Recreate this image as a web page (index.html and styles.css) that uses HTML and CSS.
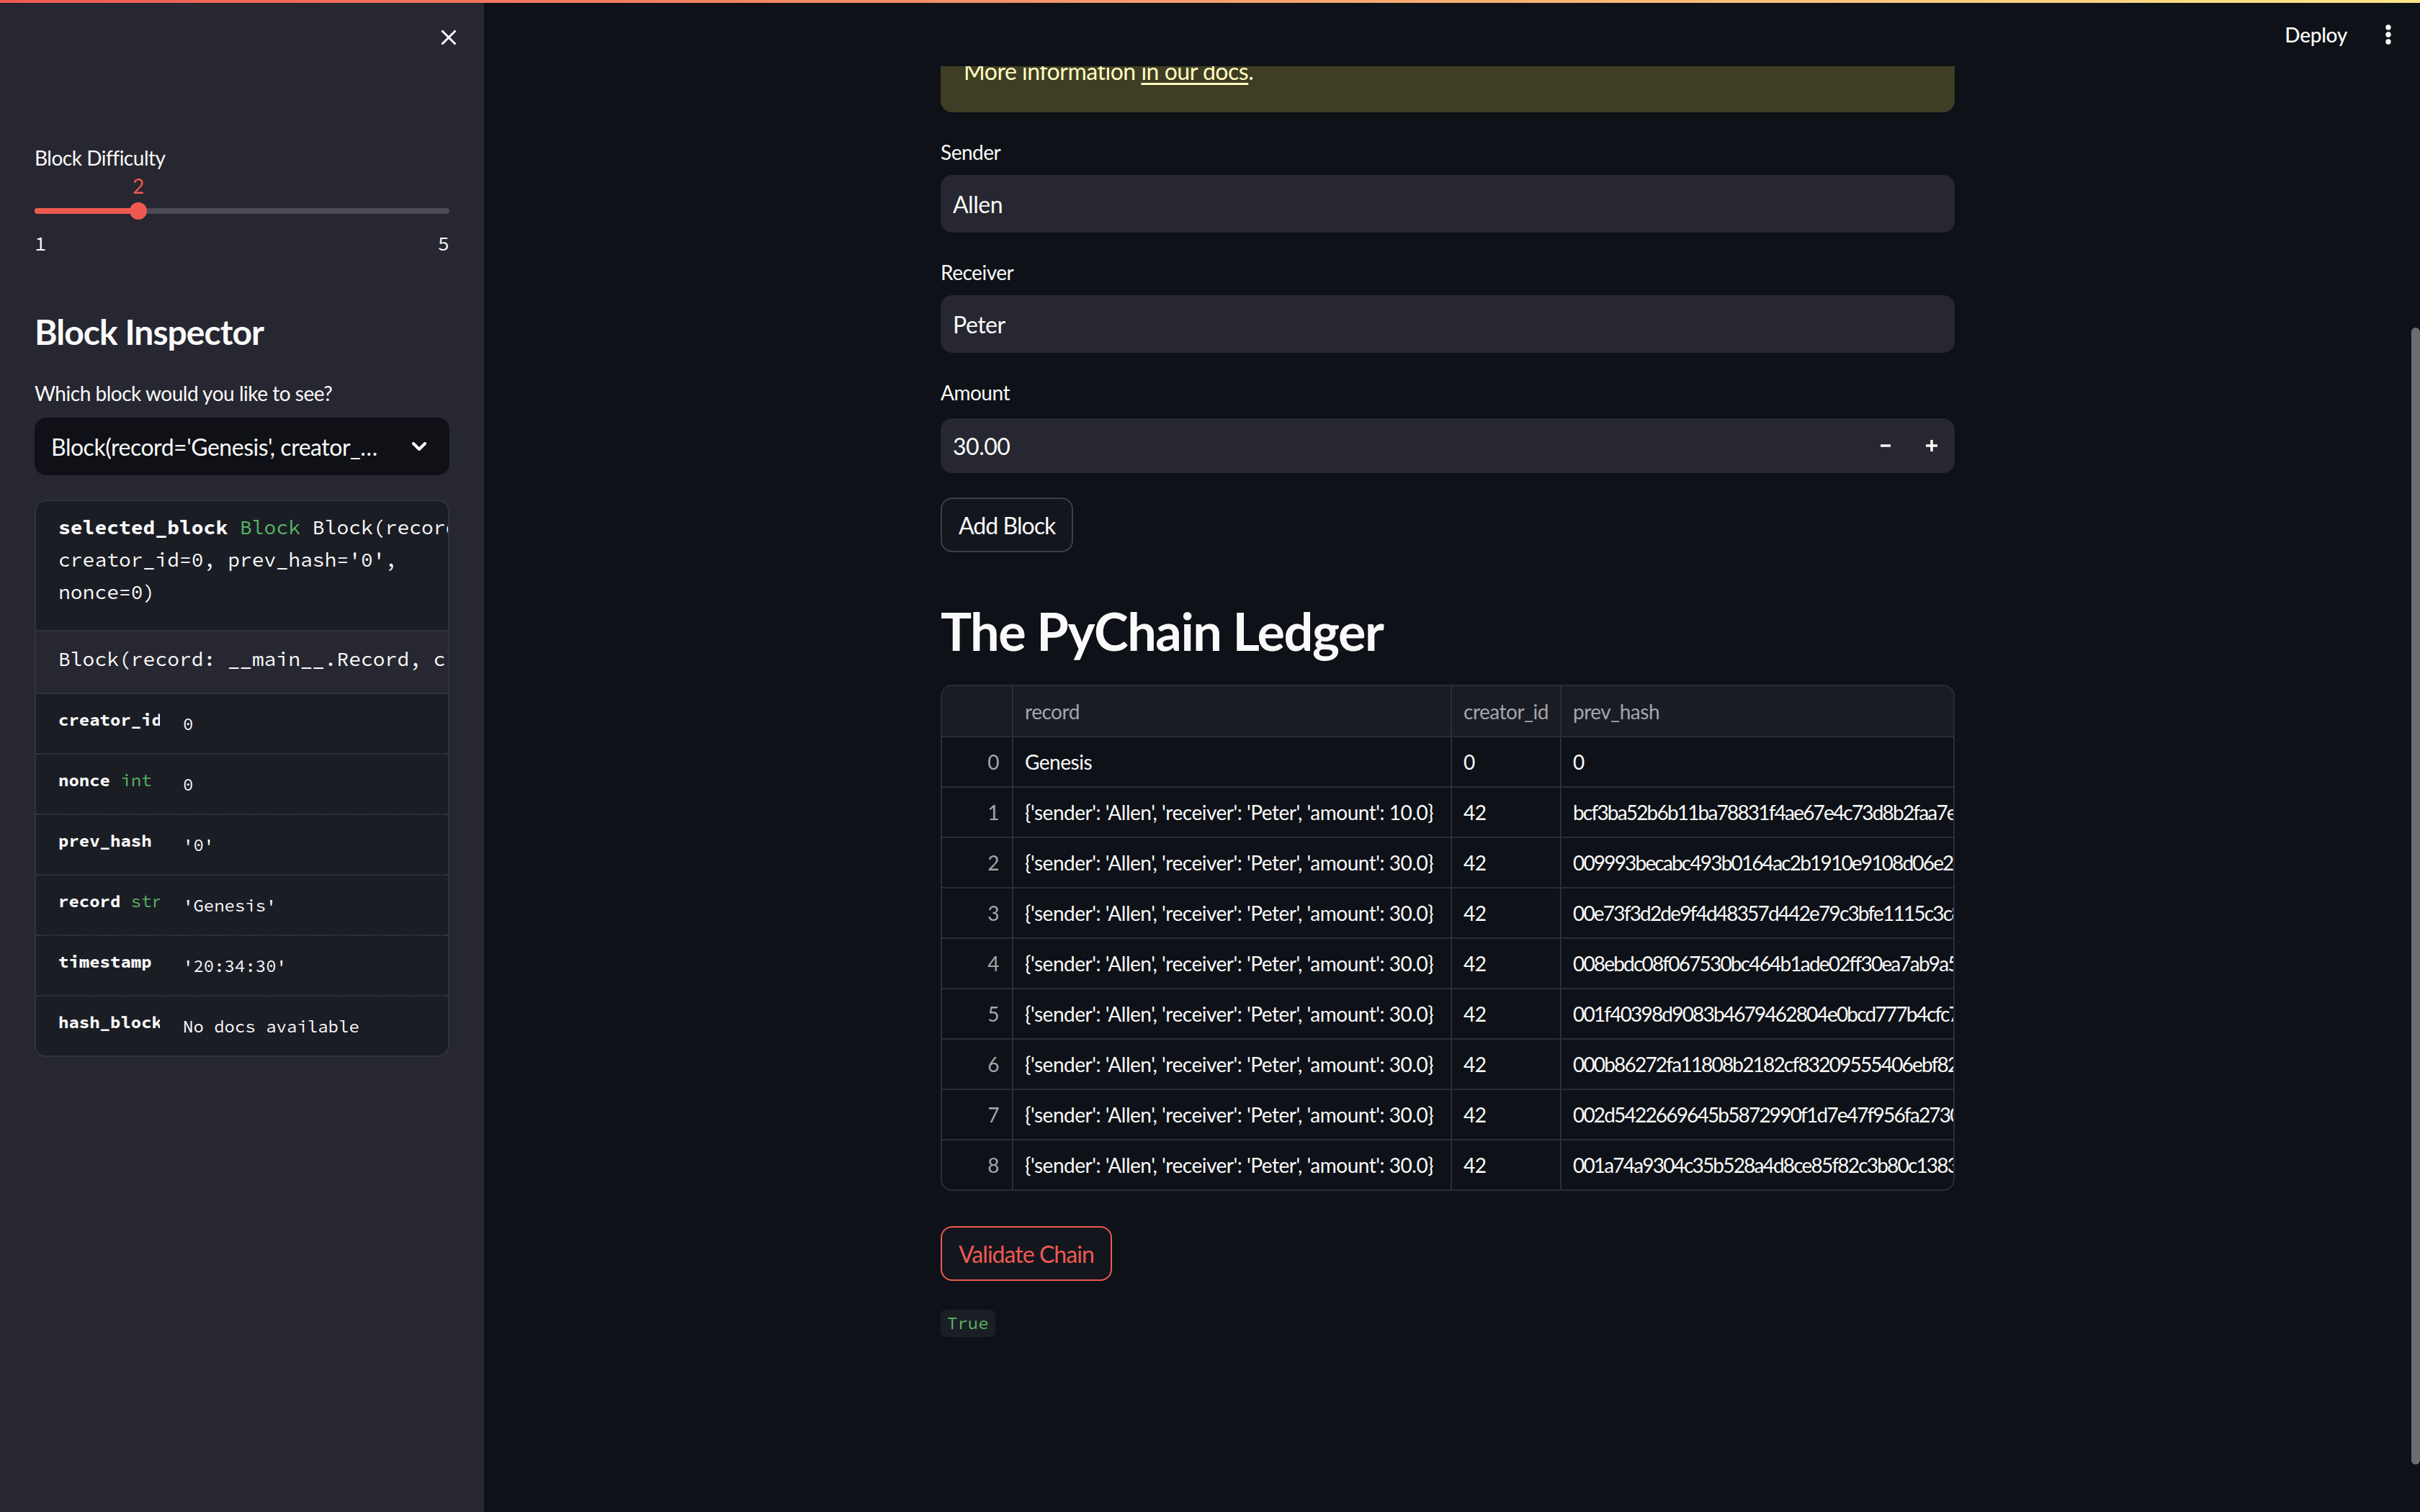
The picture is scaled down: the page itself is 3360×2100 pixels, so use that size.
FILE: index.html
```html
<!DOCTYPE html>
<html lang="en">
<head>
<meta charset="utf-8">
<title>PyChain</title>
<link rel="stylesheet" href="styles.css">
</head>
<body>
<div class="decoration"></div>
<div class="app">
  <aside class="sidebar">
    <div class="sb-header">
      <button class="close-btn" aria-label="Close sidebar">
        <svg width="22" height="22" viewBox="0 0 22 22"><path d="M1.5 1.5 L20.5 20.5 M20.5 1.5 L1.5 20.5" stroke="#fafafa" stroke-width="3" fill="none"/></svg>
      </button>
    </div>

    <div class="widget-label">Block Difficulty</div>
    <div class="slider">
      <div class="track"><div class="fill" style="width:25%"></div></div>
      <div class="thumb" style="left:25%"><span class="thumb-value">2</span></div>
    </div>
    <div class="ticks"><span>1</span><span>5</span></div>

    <h2 class="sb-title">Block Inspector</h2>
    <div class="widget-label">Which block would you like to see?</div>
    <div class="select">
      <span class="select-value">Block(record='Genesis', creator_id=0, prev_hash='0', nonce=0)</span>
      <svg class="chevron" width="20" height="12" viewBox="0 0 20 12"><path d="M2 2 L10 10 L18 2" stroke="#fafafa" stroke-width="4" fill="none" stroke-linecap="round" stroke-linejoin="round"/></svg>
    </div>

    <div class="help-panel">
      <div class="hp-head">
        <div class="hp-line"><b>selected_block</b> <span class="green">Block</span> Block(record='Genesis',</div>
        <div class="hp-line">creator_id=0, prev_hash='0',</div>
        <div class="hp-line">nonce=0)</div>
      </div>
      <div class="hp-sig">Block(record: __main__.Record, creator_id: int, prev_hash: str = '0', timestamp: str = '20:34:30', nonce: int = 0) -&gt; None</div>
      <div class="hp-row"><div class="hp-name"><b>creator_id</b> <span class="green">int</span></div><div class="hp-value">0</div></div>
      <div class="hp-row"><div class="hp-name"><b>nonce</b> <span class="green">int</span></div><div class="hp-value">0</div></div>
      <div class="hp-row"><div class="hp-name"><b>prev_hash</b> <span class="green">str</span></div><div class="hp-value">'0'</div></div>
      <div class="hp-row"><div class="hp-name"><b>record</b> <span class="green">str</span></div><div class="hp-value">'Genesis'</div></div>
      <div class="hp-row"><div class="hp-name"><b>timestamp</b> <span class="green">str</span></div><div class="hp-value">'20:34:30'</div></div>
      <div class="hp-row last"><div class="hp-name"><b>hash_block</b> <span class="green">method</span></div><div class="hp-value">No docs available</div></div>
    </div>
  </aside>

  <main class="main">
    <header class="app-header">
      <span class="deploy">Deploy</span>
      <svg class="menu" width="8" height="28" viewBox="0 0 8 28"><circle cx="4" cy="4" r="3.7" fill="#fafafa"/><circle cx="4" cy="14" r="3.7" fill="#fafafa"/><circle cx="4" cy="24" r="3.7" fill="#fafafa"/></svg>
    </header>
    <div class="view">
      <div class="content">
        <div class="alert">
          <p><code>st.cache</code> is deprecated. Please use one of Streamlit's new caching commands,</p>
          <p><code>st.cache_data</code> or <code>st.cache_resource</code>.</p>
          <p class="alert-gap">More information <a href="#">in our docs</a>.</p>
        </div>

        <div class="field-label">Sender</div>
        <div class="text-input">Allen</div>

        <div class="field-label">Receiver</div>
        <div class="text-input">Peter</div>

        <div class="field-label">Amount</div>
        <div class="number-input">
          <span class="num-value">30.00</span>
          <span class="step"><svg width="18" height="18" viewBox="0 0 18 18"><path d="M2 9 H16" stroke="#fafafa" stroke-width="3.5"/></svg></span>
          <span class="step"><svg width="18" height="18" viewBox="0 0 18 18"><path d="M1 9 H17 M9 1 V17" stroke="#fafafa" stroke-width="3.5"/></svg></span>
        </div>

        <button class="btn add-btn">Add Block</button>

        <h1 class="ledger-title">The PyChain Ledger</h1>

        <div class="table-wrap">
          <table class="ledger">
            <colgroup>
              <col class="c-idx"><col class="c-rec"><col class="c-cre"><col class="c-hash"><col class="c-ts"><col class="c-nonce">
            </colgroup>
            <thead>
              <tr><th></th><th>record</th><th>creator_id</th><th>prev_hash</th><th>timestamp</th><th>nonce</th></tr>
            </thead>
            <tbody>
              <tr><td class="idx">0</td><td>Genesis</td><td>0</td><td class="hash">0</td><td>20:34:30</td><td>0</td></tr>
              <tr><td class="idx">1</td><td>{'sender': 'Allen', 'receiver': 'Peter', 'amount': 10.0}</td><td>42</td><td class="hash">bcf3ba52b6b11ba78831f4ae67e4c73d8b2faa7e3b5c91d07a4f2e8b6d03c1f5</td><td>20:35:02</td><td>412</td></tr>
              <tr><td class="idx">2</td><td>{'sender': 'Allen', 'receiver': 'Peter', 'amount': 30.0}</td><td>42</td><td class="hash">009993becabc493b0164ac2b1910e9108d06e24a7f1c9e30b58d26e1f7a4c093</td><td>20:35:41</td><td>87</td></tr>
              <tr><td class="idx">3</td><td>{'sender': 'Allen', 'receiver': 'Peter', 'amount': 30.0}</td><td>42</td><td class="hash">00e73f3d2de9f4d48357d442e79c3bfe1115c3c8a2d71f04e96b3c58d1e2a7f0</td><td>20:35:44</td><td>301</td></tr>
              <tr><td class="idx">4</td><td>{'sender': 'Allen', 'receiver': 'Peter', 'amount': 30.0}</td><td>42</td><td class="hash">008ebdc08f067530bc464b1ade02ff30ea7ab9a5c13e8f2d6047b9a1e3c85d2f</td><td>20:35:46</td><td>129</td></tr>
              <tr><td class="idx">5</td><td>{'sender': 'Allen', 'receiver': 'Peter', 'amount': 30.0}</td><td>42</td><td class="hash">001f40398d9083b4679462804e0bcd777b4cfc72e9a05d4c81b7f36e2a90d5c1</td><td>20:35:48</td><td>56</td></tr>
              <tr><td class="idx">6</td><td>{'sender': 'Allen', 'receiver': 'Peter', 'amount': 30.0}</td><td>42</td><td class="hash">000b86272fa11808b2182cf83209555406ebf82d41c7a9e3f05b28e6c1d94a70</td><td>20:35:50</td><td>644</td></tr>
              <tr><td class="idx">7</td><td>{'sender': 'Allen', 'receiver': 'Peter', 'amount': 30.0}</td><td>42</td><td class="hash">002d5422669645b5872990f1d7e47f956fa2730b8e1f4c2a967d03e5b18f2c4a</td><td>20:35:53</td><td>215</td></tr>
              <tr class="last"><td class="idx">8</td><td>{'sender': 'Allen', 'receiver': 'Peter', 'amount': 30.0}</td><td>42</td><td class="hash">001a74a9304c35b528a4d8ce85f82c3b80c1383f7e2a1d9c04b6e85a3f1d27c0</td><td>20:35:55</td><td>98</td></tr>
            </tbody>
          </table>
        </div>

        <button class="btn validate-btn">Validate Chain</button>

        <code class="result">True</code>
      </div>
    </div>
    <div class="scroll-thumb"></div>
  </main>
</div>
</body>
</html>
```

FILE: styles.css
```css
* { box-sizing: border-box; margin: 0; padding: 0; }

html, body {
  width: 3360px;
  height: 2100px;
  overflow: hidden;
  background: #0e1117;
}

body {
  font-family: "Source Sans Pro", Lato, "Noto Sans", sans-serif;
  color: #fafafa;
  position: relative;
  letter-spacing: -0.03em;
}

.decoration {
  position: absolute;
  top: 0;
  left: 0;
  right: 0;
  height: 4px;
  background: linear-gradient(90deg, #ee5a52, #fde68a);
  z-index: 10;
}

.app {
  display: flex;
  height: 2100px;
}

/* ---------- Sidebar ---------- */
.sidebar {
  width: 672px;
  flex: none;
  background: #262730;
  padding: 0 48px;
  display: flex;
  flex-direction: column;
}

.sb-header {
  height: 195px;
  display: flex;
  justify-content: flex-end;
  align-items: flex-start;
  padding-top: 41px;
}

.close-btn {
  width: 22px;
  height: 22px;
  margin-right: -10px;
  background: none;
  border: none;
  display: flex;
}

.widget-label {
  font-size: 28px;
  line-height: 48px;
  height: 48px;
  color: #fafafa;
}

.slider {
  position: relative;
  height: 64px;
}

.track {
  position: absolute;
  left: 0;
  right: 0;
  top: 46px;
  height: 8px;
  border-radius: 4px;
  background: #4a4b55;
}

.fill {
  height: 100%;
  border-radius: 4px;
  background: #ee5a52;
}

.thumb {
  position: absolute;
  top: 38px;
  width: 24px;
  height: 24px;
  border-radius: 50%;
  background: #ee5a52;
  transform: translateX(-50%);
}

.thumb-value {
  position: absolute;
  top: -40px;
  left: 50%;
  transform: translateX(-50%);
  font-size: 28px;
  line-height: 34px;
  color: #ee5a52;
}

.ticks {
  margin-top: 10px;
  height: 42px;
  display: flex;
  justify-content: space-between;
  font-family: "Source Code Pro", "DejaVu Sans Mono", monospace;
  font-size: 27px;
  line-height: 42px;
  letter-spacing: 0;
}

.sb-title {
  margin-top: 73px;
  font-size: 48px;
  line-height: 58px;
  font-weight: 700;
  letter-spacing: -0.02em;
  margin-bottom: 32px;
}

.sb-title + .widget-label {
  margin-bottom: 10px;
}

.select {
  height: 80px;
  border-radius: 16px;
  background: #0f1116;
  display: flex;
  align-items: center;
  padding: 0 32px 0 23px;
}

.select-value {
  flex: 1;
  min-width: 0;
  font-size: 32px;
  white-space: nowrap;
  overflow: hidden;
  text-overflow: ellipsis;
}

.chevron {
  flex: none;
  margin-left: 44px;
}

.help-panel {
  margin-top: 34px;
  border: 2px solid #31333b;
  border-radius: 16px;
  background: #1b1d25;
  overflow: hidden;
  font-family: "Source Code Pro", "DejaVu Sans Mono", monospace;
  letter-spacing: 0;
}

.hp-head {
  padding: 14px 0 30px 31px;
  font-size: 28px;
  line-height: 45px;
  border-bottom: 2px solid #31333b;
}

.hp-line {
  white-space: nowrap;
}

.green {
  color: #58b563;
}

.hp-sig {
  background: #262730;
  padding: 16px 0 24px 31px;
  font-size: 28px;
  line-height: 45px;
  white-space: nowrap;
  border-bottom: 2px solid #31333b;
}

.hp-row {
  height: 84px;
  display: flex;
  padding: 18px 0 0 31px;
  border-bottom: 2px dotted #3a3c45;
  font-size: 24px;
  line-height: 36px;
}

.hp-row.last {
  border-bottom: none;
  height: 82px;
}

.hp-name {
  width: 141px;
  flex: none;
  overflow: hidden;
  white-space: nowrap;
}

.hp-value {
  margin-left: 32px;
  margin-top: 6px;
  white-space: nowrap;
}

/* ---------- Main ---------- */
.main {
  flex: 1;
  min-width: 0;
  position: relative;
  display: flex;
  flex-direction: column;
  overflow: hidden;
}

.app-header {
  height: 92px;
  flex: none;
  display: flex;
  justify-content: flex-end;
  align-items: center;
  gap: 53px;
  padding: 4px 40px 0 0;
  background: #0e1117;
  position: relative;
  z-index: 2;
}

.deploy {
  font-size: 28px;
  font-weight: 500;
  letter-spacing: -0.01em;
}

.view {
  flex: 1;
  overflow: hidden;
  padding-right: 12px;
  display: flex;
  justify-content: center;
}

.content {
  width: 1408px;
  margin-top: -175px;
  display: flex;
  flex-direction: column;
  align-items: stretch;
}

.alert {
  background: #3f3d24;
  color: #ffffc2;
  border-radius: 16px;
  padding: 32px 32px;
  font-size: 32px;
  line-height: 51px;
}

.alert code {
  font-family: "Source Code Pro", "DejaVu Sans Mono", monospace;
  font-size: 27px;
  letter-spacing: 0;
}

.alert-gap {
  margin-top: 16px;
}

.alert a {
  color: #ffffc2;
  text-decoration: underline;
  text-underline-offset: 4px;
  text-decoration-thickness: 3px;
}

.field-label {
  margin-top: 31px;
  height: 56px;
  font-size: 28px;
  line-height: 48px;
}

.text-input {
  height: 80px;
  border-radius: 16px;
  background: #262730;
  padding: 0 17px;
  display: flex;
  align-items: center;
  font-size: 32px;
}

.number-input {
  margin-top: 4px;
  height: 76px;
  border-radius: 16px;
  background: #262730;
  padding-left: 17px;
  display: flex;
  align-items: center;
  font-size: 32px;
}

.num-value {
  flex: 1;
}

.step {
  width: 64px;
  height: 76px;
  display: flex;
  align-items: center;
  justify-content: center;
}

.btn {
  align-self: flex-start;
  height: 76px;
  padding: 0 23px;
  border-radius: 16px;
  background: #13161d;
  font-family: inherit;
  font-size: 32px;
  letter-spacing: -0.03em;
  display: flex;
  align-items: center;
}

.add-btn {
  margin-top: 34px;
  border: 2px solid #3c3e46;
  color: #fafafa;
}

.ledger-title {
  margin-top: 32px;
  padding: 34px 0 0;
  font-size: 72px;
  line-height: 86px;
  font-weight: 700;
  letter-spacing: -0.02em;
}

.table-wrap {
  margin-top: 32px;
  border: 2px solid #2b2d35;
  border-radius: 16px;
  overflow: hidden;
}

.ledger {
  table-layout: fixed;
  border-spacing: 0;
  width: 2220px;
  font-size: 28px;
}

.c-idx { width: 99px; }
.c-rec { width: 609px; }
.c-cre { width: 152px; }
.c-hash { width: 960px; }
.c-ts { width: 200px; }
.c-nonce { width: 200px; }

.ledger th,
.ledger td {
  height: 70px;
  padding: 0 16px;
  border-right: 2px solid #2b2d35;
  border-bottom: 2px solid #2b2d35;
  white-space: nowrap;
  overflow: hidden;
  text-align: left;
  vertical-align: middle;
  font-weight: 400;
}

.ledger th {
  height: 71px;
  background: #1a1c23;
  color: #a3a6ae;
}

.ledger td.idx {
  text-align: right;
  padding-right: 18px;
  color: #a3a6ae;
}

.ledger td.hash {
  letter-spacing: -0.065em;
}

.ledger tr.last td {
  border-bottom: none;
  height: 68px;
}

.validate-btn {
  margin-top: 49px;
  border: 2px solid #ee5a52;
  color: #ee5a52;
}

.result {
  align-self: flex-start;
  margin-top: 40px;
  height: 38px;
  padding: 0 9px;
  border-radius: 8px;
  background: #1b1e25;
  color: #58b563;
  font-family: "Source Code Pro", "DejaVu Sans Mono", monospace;
  font-size: 24px;
  line-height: 38px;
  letter-spacing: 0;
}

.scroll-thumb {
  position: absolute;
  right: 0;
  top: 455px;
  width: 12px;
  height: 1579px;
  border-radius: 6px;
  background: #6c6d71;
}
```
